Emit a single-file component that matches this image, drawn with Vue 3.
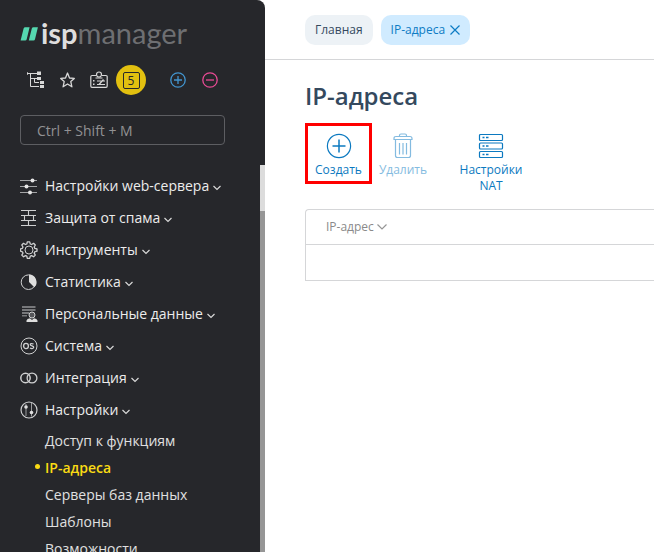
<script setup>
import { ref } from 'vue'

const search = ref('')

const menu = [
  { id: 'web', title: 'Настройки web-сервера' },
  { id: 'spam', title: 'Защита от спама' },
  { id: 'tools', title: 'Инструменты' },
  { id: 'stats', title: 'Статистика' },
  { id: 'personal', title: 'Персональные данные' },
  { id: 'system', title: 'Система' },
  { id: 'integration', title: 'Интеграция' },
  {
    id: 'settings',
    title: 'Настройки',
    children: [
      { title: 'Доступ к функциям' },
      { title: 'IP-адреса', active: true },
      { title: 'Серверы баз данных' },
      { title: 'Шаблоны' },
      { title: 'Возможности' },
    ],
  },
]
</script>

<template>
  <div class="app">
    <aside class="sidebar">
      <div class="sidebar-head">
        <a class="logo" href="#">
          <svg width="20" height="16" viewBox="0 0 20 16" fill="#55d8b0">
            <path d="M3.600 3.500Q4 2.300 5.200 2.300H9.600L6.700 14.300Q6.400 15.600 5.200 15.600H.6z" />
            <path d="M11.800 3.500Q12.200 2.300 13.400 2.300H17.900L15 14.300Q14.700 15.600 13.500 15.600H8.800z" />
          </svg>
          <span class="logo-text"><b>isp</b>manager</span>
        </a>

        <div class="quick">
          <button class="quick-btn" type="button" aria-label="Дерево">
            <svg width="18" height="18" viewBox="0 0 18 18" fill="none" stroke="#d8d8d8">
              <path d="M1 2.500H11M4.500 3V15.500H13M4.500 7.500H11M8.500 7.500V11.500H13" />
              <path d="M1.500 1V4" opacity=".7" />
              <path d="M11 .5h4v3.500h-4zM11 6h4v3h-4zM14 10h4v3h-4zM14 14h4v3h-4z" fill="#d8d8d8" stroke="none" />
            </svg>
          </button>
          <button class="quick-btn" type="button" aria-label="Избранное">
            <svg width="18" height="18" viewBox="0 0 18 18" fill="none" stroke="#d8d8d8" stroke-width="1.300" stroke-linejoin="round">
              <path d="M9.500 2 11.500 7l4.800.4-3.500 3.200 1.100 5.200-4.400-2.800-4.400 2.800 1.100-5.200L2.700 7.400 7.500 7z" />
            </svg>
          </button>
          <button class="quick-btn" type="button" aria-label="Задания">
            <svg width="18" height="18" viewBox="0 0 18 18" fill="none" stroke="#d8d8d8" stroke-width="1.200">
              <path d="M6 4.500H2Q.8 4.500.8 5.700V15Q.8 16.300 2 16.300H16Q17.200 16.300 17.200 15V5.700Q17.200 4.500 16 4.500H12" />
              <circle cx="9" cy="3.500" r="2.500" />
              <path d="M5.500 7H12.500M7 10H15M7 13.500H15M9 13.500 13.500 8.500" />
              <path d="M3 9h1.500v1.500H3zM3 12.500h1.500V14H3z" fill="#d8d8d8" stroke="none" />
            </svg>
          </button>
          <button class="badge" type="button" aria-label="Уведомления: 5"><span>5</span></button>
          <button class="quick-btn" type="button" aria-label="Развернуть">
            <svg width="18" height="18" viewBox="0 0 18 18" fill="none" stroke="#4295cf" stroke-width="1.300">
              <circle cx="9" cy="9" r="7.200" />
              <path d="M9 5V13M5 9H13" />
            </svg>
          </button>
          <button class="quick-btn" type="button" aria-label="Свернуть">
            <svg width="18" height="18" viewBox="0 0 18 18" fill="none" stroke="#e84a94" stroke-width="1.300">
              <circle cx="9" cy="9" r="7.200" />
              <path d="M5 9H13" />
            </svg>
          </button>
        </div>

        <input v-model="search" class="search" type="text" aria-label="Поиск" placeholder="Ctrl + Shift + M" />
      </div>

      <div class="sidebar-body">
        <nav class="menu">
          <template v-for="item in menu" :key="item.id">
            <button class="menu-item" type="button" :aria-expanded="!!item.children">
              <svg class="menu-icon" width="18" height="18" viewBox="0 0 18 18" fill="none" stroke="#cfd0d1">
                <template v-if="item.id === 'web'">
                  <path d="M0 3.500H17M0 9.500H17M0 15.500H17" opacity=".75" />
                  <g fill="#e6e6e6" stroke="none">
                    <circle cx="12.500" cy="3.500" r="2" />
                    <circle cx="6.500" cy="9.500" r="2" />
                    <circle cx="10" cy="15.500" r="2" />
                  </g>
                </template>
                <template v-else-if="item.id === 'spam'">
                  <path d="M1 1.500H16M1 6.500H16M1 11.500H16M1 16.500H16M8.500 1.500V6.500M4.500 6.500V11.500M13.500 6.500V11.500M8.500 11.500V16.500" stroke-width="1.100" />
                </template>
                <template v-else-if="item.id === 'tools'">
                  <circle cx="9" cy="9" r="4" />
                  <path d="M7.300.8h2.400l.6 2.200 1.300.5 2-1.200 1.700 1.700-1.100 2 .5 1.300 2.300.6v2.300l-2.300.6-.5 1.300 1.100 2-1.700 1.700-2-1.200-1.300.6-.6 2.200H7.300l-.5-2.200-1.300-.6-2 1.200-1.700-1.700L3 12.100l-.6-1.300-1.900-.6V7.900l1.900-.6L3 6 1.800 4l1.700-1.700 2 1.200L6.800 3z" stroke-width="1.300" stroke-linejoin="round" />
                </template>
                <template v-else-if="item.id === 'stats'">
                  <circle cx="8.500" cy="9.200" r="7.300" />
                  <path d="M9 1.500A7.500 7.500 0 0 1 14.300 14.300L9 9z" fill="#dedede" stroke="none" />
                </template>
                <template v-else-if="item.id === 'personal'">
                  <path d="M2 1H15.500V3H2zM2 4H15.500V6H2zM2 7H9V9H2zM2 10H7V11.500H2z" fill="#77787b" stroke="none" />
                  <circle cx="12" cy="10" r="3" fill="#55565a" />
                  <path d="M6.500 17V15.500Q7 13.500 10 13.200L12 15l2-1.800q3 .3 3.500 2.300V17z" fill="#dedede" stroke="none" />
                </template>
                <template v-else-if="item.id === 'system'">
                  <circle cx="9" cy="9" r="8" />
                  <ellipse cx="6" cy="9" rx="2.400" ry="2.600" stroke-width="1.300" />
                  <path d="M13.600 7Q10.200 6 10.300 7.700C10.400 9.200 13.700 8.700 13.700 10.300 13.600 12 11 11.700 10 11" stroke-width="1.300" />
                </template>
                <template v-else-if="item.id === 'integration'">
                  <circle cx="5.500" cy="9" r="4.700" stroke-width="1.500" />
                  <circle cx="12" cy="9" r="4.900" stroke-width="1.300" />
                </template>
                <template v-else>
                  <circle cx="9" cy="9" r="8" stroke-width="1.200" />
                  <path d="M6 3V15M11.500 2V15.500" opacity=".7" />
                  <g fill="#dedede" stroke="none">
                    <circle cx="6" cy="6" r="1.800" />
                    <circle cx="11.500" cy="11.500" r="1.800" />
                  </g>
                </template>
              </svg>
              <span>{{ item.title }}</span>
              <svg class="chevron" width="8" height="6" viewBox="0 0 8 6" fill="none" stroke="#d8d8d8" stroke-width="1.200">
                <path d="M.5 1 4 4.500 7.500 1" />
              </svg>
            </button>
            <ul v-if="item.children" class="submenu">
              <li v-for="child in item.children" :key="child.title">
                <a href="#" :class="{ active: child.active }">{{ child.title }}</a>
              </li>
            </ul>
          </template>
        </nav>
        <div class="track"><div class="thumb"></div></div>
      </div>
    </aside>

    <main class="content">
      <header class="tabs">
        <a class="tab" href="#">Главная</a>
        <div class="tab current">
          <span>IP-адреса</span>
          <button type="button" aria-label="Закрыть вкладку">
            <svg width="10" height="10" viewBox="0 0 10 10" fill="none" stroke="#0d7cc4" stroke-width="1.200">
              <path d="M.5.5 9.500 9.500M9.500.5.5 9.500" />
            </svg>
          </button>
        </div>
      </header>

      <section class="page">
        <h1>IP-адреса</h1>
        <div class="toolbar">
          <button class="tool marked" type="button">
            <svg width="26" height="26" viewBox="0 0 26 26" fill="none" stroke="#0b79c0" stroke-width="1.200">
              <circle cx="13" cy="13" r="11.600" />
              <path d="M13 6.500V19.500M6.500 13H19.500" stroke-width="1.500" />
            </svg>
            <span>Создать</span>
          </button>
          <button class="tool remove" type="button" disabled>
            <svg width="26" height="26" viewBox="0 0 26 26" fill="none" stroke="#84bbe0" stroke-width="1.200">
              <path d="M4 6.500V5.500Q4 3.500 6 3.500H20Q22 3.500 22 5.500V6.500zM9.500 3.500V2.500Q9.500 1 11 1H15Q16.500 1 16.500 2.500V3.500M5.500 6.500V22.500Q5.500 24.500 7.500 24.500H18.500Q20.500 24.500 20.500 22.500V6.500M9.500 10V21.500M13 10V21.500M16.500 10V21.500" />
            </svg>
            <span>Удалить</span>
          </button>
          <button class="tool nat" type="button">
            <svg width="26" height="26" viewBox="0 0 26 26" fill="none" stroke="#0b79c0" stroke-width="1.200">
              <rect x="1.500" y="1.500" width="23" height="6" rx="1" />
              <rect x="1.500" y="10" width="23" height="6" rx="1" />
              <rect x="1.500" y="18.500" width="23" height="6" rx="1" />
              <path d="M4.500 4.500h2M8 4.500h2.500M4.500 13h2M8 13h2.500M4.500 21.500h2M8 21.500h2.500" stroke-width="1.500" />
            </svg>
            <span>Настройки NAT</span>
          </button>
        </div>

        <table class="grid">
          <thead>
            <tr>
              <th scope="col">
                <button class="sort" type="button">
                  IP-адрес
                  <svg width="10" height="6" viewBox="0 0 10 6" fill="none" stroke="#969696" stroke-width="1.200">
                    <path d="M.5.5 5 5 9.500.5" />
                  </svg>
                </button>
              </th>
            </tr>
          </thead>
          <tbody>
            <tr><td></td></tr>
          </tbody>
        </table>
      </section>
    </main>
  </div>
</template>

<style>
body {
  margin: 0;
  background: #fff;
}
</style>

<style scoped>
.app {
  display: flex;
  height: 100vh;
  overflow: hidden;
  font-family: "Open Sans", "Noto Sans", sans-serif;
  font-size: 12px;
  line-height: 16px;
}

button {
  padding: 0;
  border: 0;
  background: none;
  font: inherit;
  color: inherit;
  cursor: pointer;
}

a {
  color: inherit;
  text-decoration: none;
}

svg {
  display: block;
  flex: none;
}

.sidebar {
  display: flex;
  flex-direction: column;
  flex: none;
  width: 265px;
  background: #26272b;
  color: #e0e0e0;
  border-top-right-radius: 8px;
}

.sidebar-head {
  padding: 17px 40px 20px 20px;
}

.logo {
  display: flex;
  align-items: center;
  gap: 1px;
  height: 32px;
}

.logo-text {
  font-family: Lato, sans-serif;
  font-size: 29px;
  line-height: 32px;
  color: #6e6f72;
}

.logo-text b {
  color: #dedede;
}

.quick {
  display: flex;
  align-items: center;
  gap: 14px;
  margin: 16px 0 20px 6px;
  height: 30px;
}

.badge {
  display: grid;
  place-items: center;
  width: 30px;
  height: 30px;
  margin: 0 9px 0 -6px;
  border-radius: 50%;
  background: #e2c010;
  color: #26272b;
}

.badge span {
  width: 15px;
  height: 15px;
  border: 1px solid #26272b;
  border-radius: 2px;
  line-height: 15px;
}

.search {
  display: block;
  box-sizing: border-box;
  width: 100%;
  height: 30px;
  padding: 0 16px;
  border: 1px solid #5d5e62;
  border-radius: 4px;
  background: transparent;
  color: #e0e0e0;
  font: inherit;
  font-size: 14px;
}

.search::placeholder {
  color: #929294;
  opacity: 1;
}

.sidebar-body {
  display: flex;
  flex: 1;
  min-height: 0;
}

.menu {
  flex: 1;
  overflow: hidden;
  padding: 5px 0 0 20px;
  font-size: 14px;
}

.menu-item {
  display: flex;
  align-items: center;
  height: 32px;
  color: #ececec;
  font-weight: 500;
  white-space: nowrap;
}

.menu-icon {
  margin-right: 7px;
}

.chevron {
  margin: 3px 0 0 4px;
}

.submenu {
  margin: 1px 0 0;
  padding: 0 0 0 25px;
  list-style: none;
}

.submenu a {
  display: block;
  line-height: 27px;
}

.submenu .active {
  position: relative;
  color: #fadb14;
  font-weight: 600;
}

.submenu .active::before {
  content: "";
  position: absolute;
  top: 10px;
  left: -10px;
  width: 5px;
  height: 5px;
  border-radius: 50%;
  background: #fadb14;
}

.track {
  width: 5px;
  background: #969696;
}

.thumb {
  height: 46px;
  background: #dcdcdc;
}

.content {
  flex: 1;
  min-width: 0;
}

.tabs {
  display: flex;
  gap: 8px;
  padding: 15px 0 14px 40px;
  border-bottom: 1px solid #d5d6d8;
}

.tab {
  display: flex;
  align-items: center;
  gap: 5px;
  height: 30px;
  padding: 0 10px;
  border-radius: 10px;
  background: #edf2f6;
  color: #34495e;
}

.tab.current {
  background: #d0ebff;
  color: #0d7cc4;
}

.page {
  padding: 19px 0 0 40px;
}

h1 {
  margin: 0;
  color: #34495e;
  font-size: 24px;
  line-height: 34px;
  font-weight: 600;
}

.toolbar {
  display: flex;
  align-items: flex-start;
  margin-top: 10px;
}

.tool {
  display: flex;
  flex-direction: column;
  align-items: center;
  gap: 3px;
  box-sizing: border-box;
  padding: 10px 0 6px;
  color: #0b79c0;
}

.marked {
  width: 67px;
  padding: 7px 0 3px;
  border: 3px solid #f00;
}

.remove {
  width: 62px;
  color: #84bbe0;
}

.nat {
  width: 70px;
  margin-left: 22px;
}

.grid {
  width: 100%;
  margin-top: 9px;
  border: 1px solid #d5d6d8;
  border-right: 0;
  border-top-left-radius: 4px;
  border-spacing: 0;
}

.grid th {
  height: 34px;
  padding: 0 20px;
  border-bottom: 1px solid #d5d6d8;
  text-align: left;
  font-weight: 400;
}

.grid td {
  height: 35px;
  padding: 0;
}

.sort {
  display: flex;
  align-items: center;
  gap: 3px;
  color: #8a8a8a;
}
</style>
